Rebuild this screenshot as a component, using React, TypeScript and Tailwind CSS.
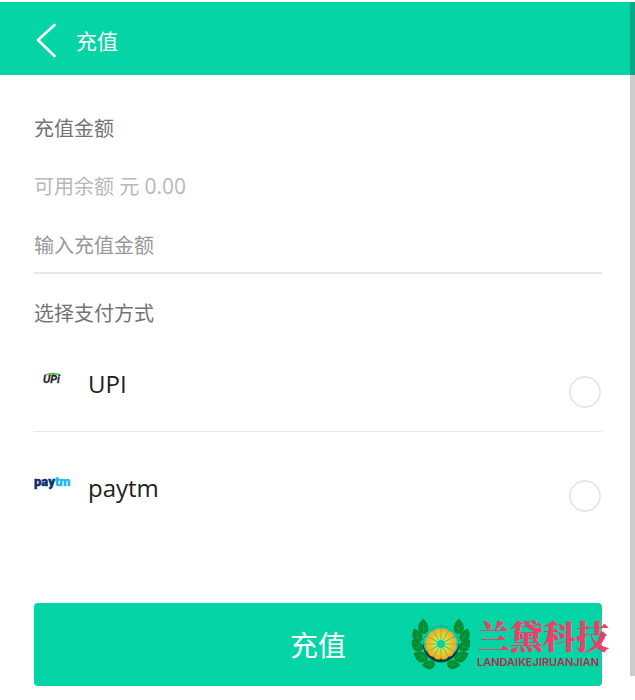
import { useState } from 'react';

const BLADES = Array.from({ length: 12 }, (_, i) => i * 30 + 15);

// Leaves of the right-hand branch: centre x, centre y, rotation, scale
const LEAVES: [number, number, number, number][] = [
  [18, -17, 5, 1.05],
  [24, -8, 28, 1],
  [24, 2, 45, 1],
  [20, 13, 68, 1.05],
  [12, 21, 98, 0.9],
];

function Branch() {
  return (
    <g>
      {LEAVES.map(([x, y, angle, scale]) => (
        <g key={angle} transform={`translate(${x} ${y}) rotate(${angle}) scale(${scale})`}>
          <path d="M0 7C-7 5-6-2-1-8C6-3 7 4 0 7Z" fill="#078b2c" />
          <path d="M0 6Q-1 1-1-4M0 2L3-1M0 3L-3 0" fill="none" stroke="#06b070" strokeWidth="0.5" />
        </g>
      ))}
    </g>
  );
}

function Emblem() {
  return (
    <svg className="h-[54px] w-[60px] shrink-0" viewBox="-30 -27 60 54" aria-hidden="true">
      <defs>
        <radialGradient id="blade" gradientUnits="userSpaceOnUse" cx="0" cy="0" r="16">
          <stop offset="0.3" stopColor="#f5e02c" />
          <stop offset="1" stopColor="#f7a41a" />
        </radialGradient>
      </defs>
      <Branch />
      <g transform="scale(-1 1)">
        <Branch />
      </g>
      <circle r="18.5" fill="#05d4a7" />
      <circle r="18" fill="none" stroke="#075b48" strokeWidth="0.7" strokeDasharray="1.5 1.5" />
      <path d="M-18 0A18 18 0 0 0 18 0A18.2 16.8 0 0 1-18 0Z" fill="#053f38" stroke="#053f38" strokeWidth="0.5" />
      {BLADES.map((angle) => (
        <path
          key={angle}
          d="M-0.6-4L-3.6-14.5Q0-17.500 3.6-14.5L0.6-4Z"
          transform={`rotate(${angle})`}
          fill="url(#blade)"
        />
      ))}
    </svg>
  );
}

function UpiLogo() {
  return (
    <svg className="h-6 w-9" viewBox="0 0 36 24" role="img" aria-label="UPI">
      <path d="M11 9Q19 5 27 9Q19 7.500 11 9Z" fill="#45b54a" stroke="#45b54a" strokeWidth="0.6" />
      <text x="9" y="17" fontSize="10" fontStyle="italic" fontWeight="700" fill="#222222" stroke="#222222" strokeWidth="0.3" className="font-['Liberation_Sans',sans-serif]">UPi</text>
    </svg>
  );
}

function PaytmLogo() {
  return (
    <svg className="h-6 w-9 overflow-visible" viewBox="0 0 36 24" role="img" aria-label="paytm">
      <text x="0" y="16" fontSize="13" fontWeight="900" fill="#0b2f6b" stroke="#0b2f6b" strokeWidth="0.4" className="font-['Roboto',sans-serif]">
        pay<tspan fill="#1cb8ee" stroke="#1cb8ee">tm</tspan>
      </text>
    </svg>
  );
}

const METHODS = [
  { id: 'upi', name: 'UPI', Logo: UpiLogo },
  { id: 'paytm', name: 'paytm', Logo: PaytmLogo },
];

export default function App() {
  const [method, setMethod] = useState('');
  const [amount, setAmount] = useState('');

  return (
    <div className="relative min-h-screen bg-white pt-[2px] font-['Open_Sans','Noto_Sans_CJK_SC',sans-serif]">
      <header className="flex h-[73px] items-center bg-[#05d4a7] pt-1 pl-9 text-white">
        <button type="button" aria-label="返回" className="mr-5 flex">
          <svg className="h-9 w-5" viewBox="0 0 20 36" fill="none" stroke="currentColor" strokeWidth="2.6">
            <path d="M18.5 2L2 17L18.500 33" strokeLinecap="round" strokeLinejoin="round" />
          </svg>
        </button>
        <h1 className="text-[21px] leading-8">充值</h1>
      </header>

      <main className="pt-[38px] pr-[33px] pl-[34px]">
        <h2 className="text-[20px] leading-8 text-[#737373]">充值金额</h2>
        <p className="mt-[25px] text-[20px] leading-8 text-[#b8b8b8]">
          可用余额 元 <span className="text-[21px]">0.00</span>
        </p>
        <input
          type="text"
          inputMode="decimal"
          aria-label="充值金额"
          placeholder="输入充值金额"
          value={amount}
          onChange={(e) => setAmount(e.target.value)}
          className="mt-4 block h-[55px] w-full border-b-2 border-[#e8e8e8] bg-transparent text-[20px] text-[#737373] outline-none placeholder:text-[#989898]"
        />

        <fieldset>
          <legend className="pt-[26px] text-[20px] leading-7 text-[#737373]">选择支付方式</legend>
          {METHODS.map(({ id, name, Logo }) => (
            <label key={id} className="flex h-[104px] items-center border-b border-[#e8e8e8] last:border-b-transparent">
              <span className="mb-1">
                <Logo />
              </span>
              <span className="ml-[18px] pt-2 text-[24px] leading-8 text-[#222222]">{name}</span>
              <input
                type="radio"
                name="method"
                value={id}
                checked={method === id}
                onChange={() => setMethod(id)}
                className="mt-6 mr-px ml-auto size-8 appearance-none rounded-full border-2 border-[#e8e8e8] bg-white checked:border-[10px] checked:border-[#05d4a7]"
              />
            </label>
          ))}
        </fieldset>

        <button type="button" className="mt-[67px] block h-[83px] w-full rounded-[4px] bg-[#05d4a7] text-[28px] text-white">
          充值
        </button>
      </main>

      <div className="pointer-events-none absolute top-[2px] right-0 h-[674px] w-[5px] bg-black/20" />

      <div className="pointer-events-none absolute right-[26px] bottom-[29px] flex items-center gap-[6px]">
        <Emblem />
        <div>
          <p className="font-['Noto_Serif_CJK_SC','Noto_Sans_CJK_SC',serif] text-[33px] leading-9 font-black text-[#f23d68]">兰黛科技</p>
          <p className="font-['Inter',sans-serif] text-[11px] leading-[18px] font-semibold text-[#b02f4a]">LANDAIKEJIRUANJIAN</p>
        </div>
      </div>
    </div>
  );
}
